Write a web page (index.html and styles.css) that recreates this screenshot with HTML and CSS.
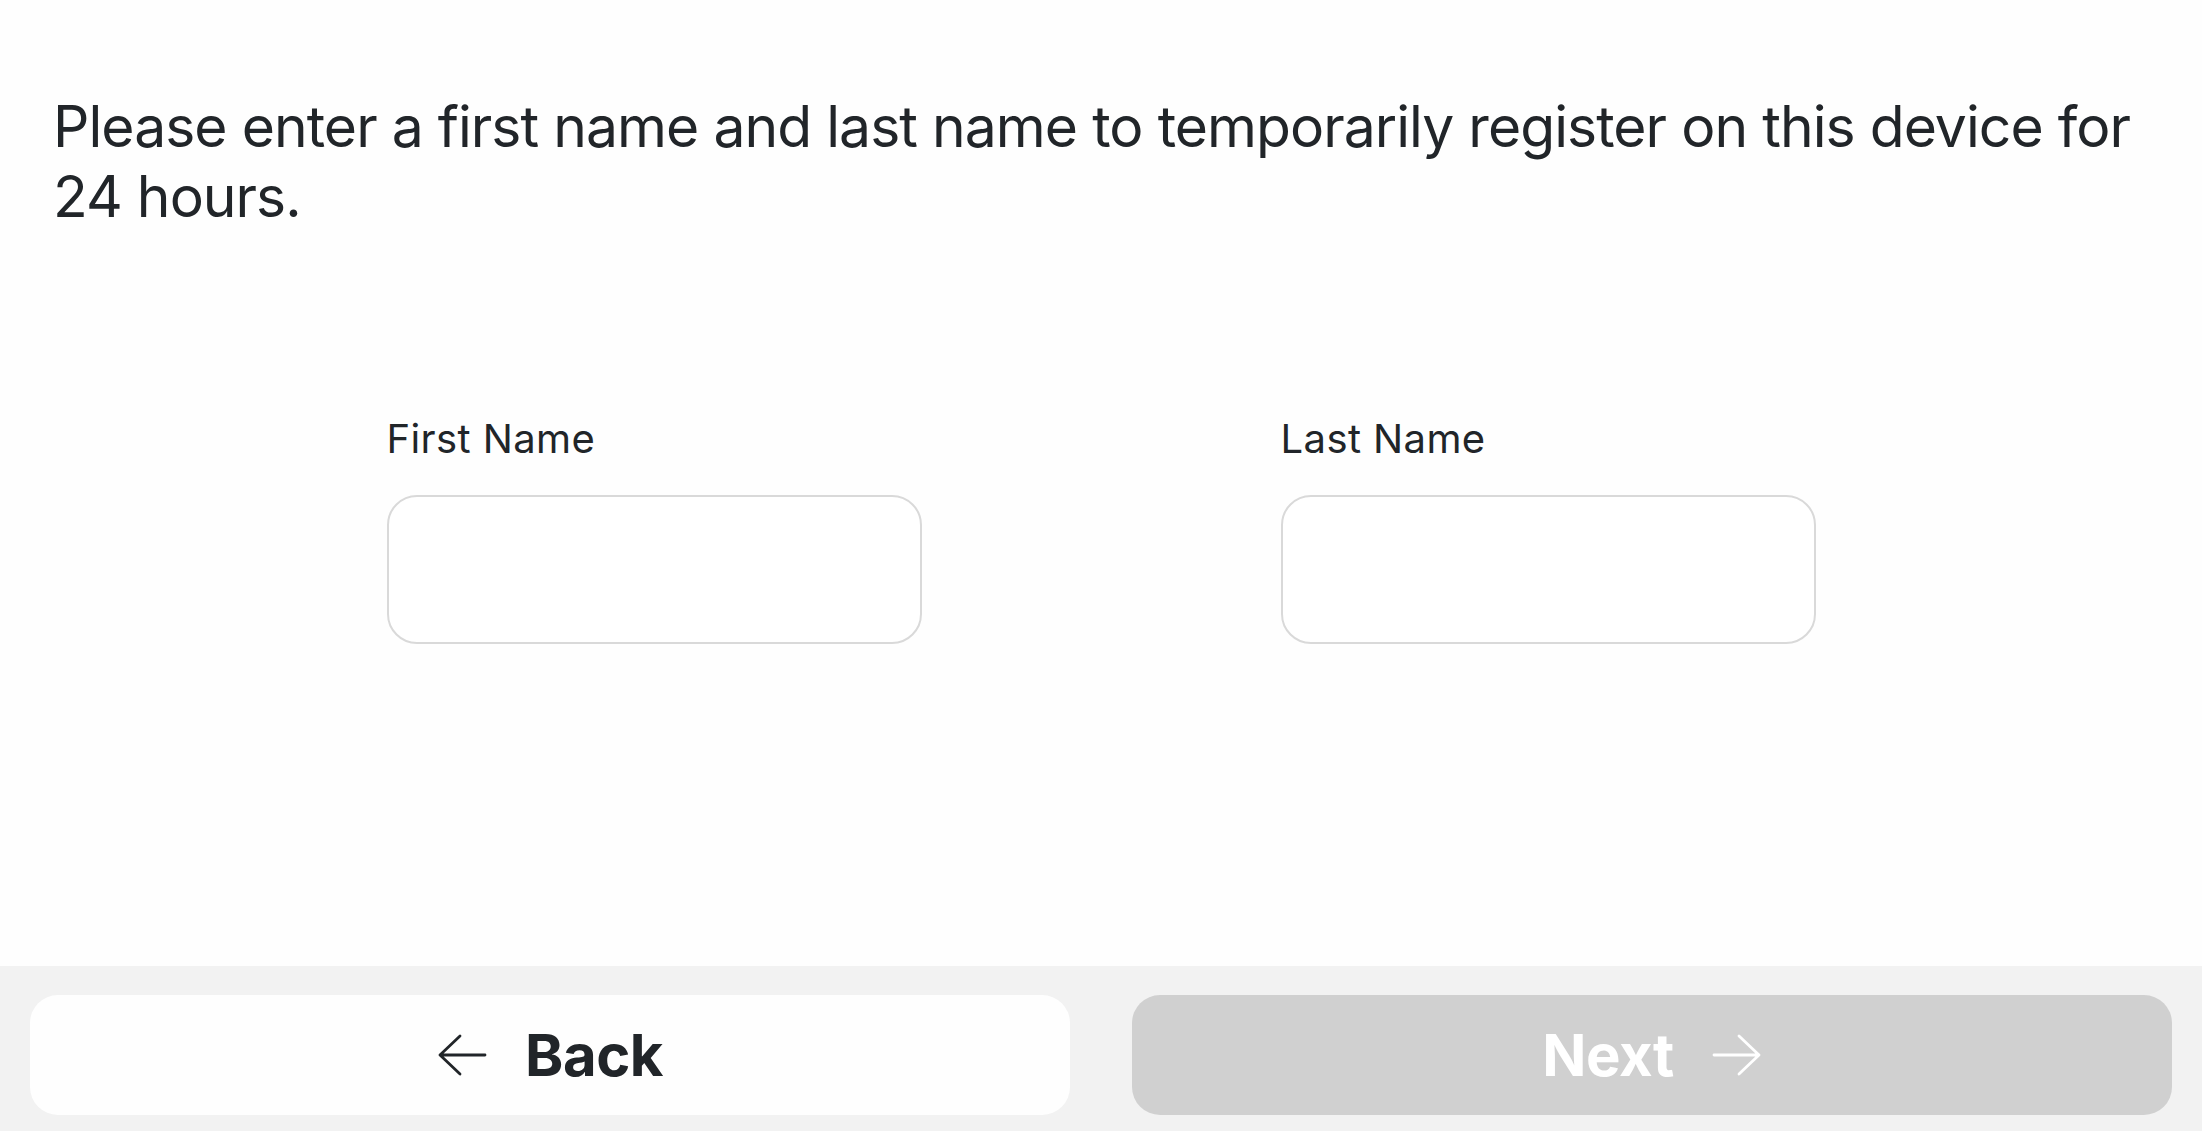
FILE: index.html
```html
<!DOCTYPE html>
<html lang="en">
<head>
<meta charset="utf-8">
<title>Temporary Registration</title>
<link rel="stylesheet" href="styles.css">
</head>
<body>
<main class="content">
  <p class="intro">Please enter a first name and last name to temporarily register on this device for 24 hours.</p>
  <form class="name-form">
    <div class="field">
      <label class="field-label" for="first">First Name</label>
      <input class="field-input" id="first" type="text">
    </div>
    <div class="field">
      <label class="field-label" for="last">Last Name</label>
      <input class="field-input" id="last" type="text">
    </div>
  </form>
</main>
<footer class="actions">
  <button class="btn btn-back" type="button">
    <svg class="arrow" width="50" height="42" viewBox="0 0 50 42" aria-hidden="true"><path d="M3 21 H48 M23 2 L3 21 L23 40" fill="none" stroke="currentColor" stroke-width="2.8" stroke-linecap="round" stroke-linejoin="round"/></svg>
    <span>Back</span>
  </button>
  <button class="btn btn-next" type="button" disabled>
    <span>Next</span>
    <svg class="arrow" width="50" height="42" viewBox="0 0 50 42" aria-hidden="true"><path d="M2 21 H47 M27 2 L47 21 L27 40" fill="none" stroke="currentColor" stroke-width="2.8" stroke-linecap="round" stroke-linejoin="round"/></svg>
  </button>
</footer>
</body>
</html>
```
FILE: styles.css
```css
* { box-sizing: border-box; }
html, body { height: 100%; }
body {
  margin: 0;
  display: flex;
  flex-direction: column;
  background: #fefefe;
  color: #212529;
  font-family: Inter, "Noto Sans", sans-serif;
}
.content {
  flex: 1;
  padding: 92px 30px 0 53px;
}
.intro {
  margin: 0;
  font-size: 57px;
  line-height: 70px;
  font-weight: 400;
  letter-spacing: -0.95px;
}
.name-form {
  display: flex;
  justify-content: center;
  gap: 359px;
  margin-top: 184px;
  margin-left: -23px;
}
.field {
  width: 535px;
  display: flex;
  flex-direction: column;
}
.field-label {
  font-size: 40px;
  line-height: 46px;
  letter-spacing: 0.4px;
  margin-bottom: 33px;
}
.field-input {
  height: 149px;
  border: 2px solid #d9d9d9;
  border-radius: 30px;
  background: #fff;
  font: inherit;
  font-size: 38px;
  padding: 0 24px;
  outline: none;
}
.actions {
  height: 165px;
  flex: none;
  background: #f2f2f2;
  display: flex;
  gap: 62px;
  padding: 29px 30px 16px;
}
.btn {
  flex: 1;
  border: none;
  border-radius: 28px;
  display: flex;
  align-items: center;
  justify-content: center;
  gap: 38px;
  font-family: Inter, "Noto Sans", sans-serif;
  font-size: 58px;
  font-weight: 700;
  letter-spacing: -0.5px;
}
.btn-back {
  background: #fefefe;
  color: #212529;
}
.btn-next {
  background: #d0d0d0;
  color: #ffffff;
}
.arrow { display: block; }
```
